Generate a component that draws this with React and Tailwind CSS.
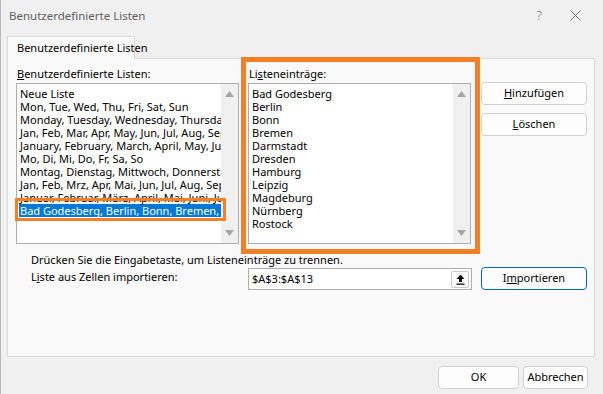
import React from 'react';

const leftItems = [
  'Neue Liste',
  'Mon, Tue, Wed, Thu, Fri, Sat, Sun',
  'Monday, Tuesday, Wednesday, Thursday, Friday, Saturday, Sunday',
  'Jan, Feb, Mar, Apr, May, Jun, Jul, Aug, Sep, Oct, Nov, Dec',
  'January, February, March, April, May, June, July',
  'Mo, Di, Mi, Do, Fr, Sa, So',
  'Montag, Dienstag, Mittwoch, Donnerstag, Freitag',
  'Jan, Feb, Mrz, Apr, Mai, Jun, Jul, Aug, Sep, Okt',
  'Januar, Februar, März, April, Mai, Juni, Juli',
  'Bad Godesberg, Berlin, Bonn, Bremen, Darmstadt',
];

const cities = [
  'Bad Godesberg',
  'Berlin',
  'Bonn',
  'Bremen',
  'Darmstadt',
  'Dresden',
  'Hamburg',
  'Leipzig',
  'Magdeburg',
  'Nürnberg',
  'Rostock',
];

const ScrollBar = () => (
  <div className="w-[17px] h-full bg-[#f0f0f0] flex flex-col items-center justify-between py-[7px]">
    <svg width="9" height="6" viewBox="0 0 9 6">
      <path d="M0 6 L4.5 0 L9 6 Z" fill="#a6a6a6" />
    </svg>
    <svg width="9" height="6" viewBox="0 0 9 6">
      <path d="M0 0 L4.5 6 L9 0 Z" fill="#a6a6a6" />
    </svg>
  </div>
);

const Button = ({ children, primary, className = '' }) => (
  <button
    className={
      'h-[23px] rounded-[4px] bg-[#fdfdfd] text-[11px] text-black flex items-center justify-center whitespace-nowrap ' +
      (primary ? 'border border-[#0067c0] ' : 'border border-[#d1d1d1] ') +
      className
    }
  >
    {children}
  </button>
);

export default function App() {
  return (
    <div
      className="relative w-[603px] h-[394px] bg-[#f0f0f0] border-l border-[#b8b8b8] text-[11px] text-black overflow-hidden"
      style={{ fontFamily: '"Noto Sans", "Open Sans", sans-serif' }}
    >
      {/* title bar */}
      <div className="h-[31px] flex items-center justify-between pl-[8px] pr-[22px]">
        <span className="text-[#5f5f5f] text-[11.5px]">Benutzerdefinierte Listen</span>
        <div className="flex items-center gap-[28px] text-[#6f6f6f]">
          <span className="text-[13px] font-light">?</span>
          <svg width="11" height="11" viewBox="0 0 11 11">
            <path d="M0.5 0.5 L10.5 10.5 M10.5 0.5 L0.5 10.5" stroke="#6f6f6f" strokeWidth="1" />
          </svg>
        </div>
      </div>

      {/* tab */}
      <div className="pl-[6px] h-[27px] flex items-end">
        <div className="h-[23px] w-[128px] -mb-px relative z-10 border border-b-0 border-[#d9d9d9] bg-[#f9f9f9] flex items-center pl-[9px] whitespace-nowrap">
          Benutzerdefinierte Listen
        </div>
      </div>

      {/* panel */}
      <div className="ml-[6px] mr-[8px] h-[299px] border border-[#d9d9d9] bg-[#f9f9f9]">
        <div className="flex pl-[8px] pt-[7px]">
          <div className="w-[224px]">
            <div className="h-[15px] leading-[15px] pl-[1px]">
              <u>B</u>enutzerdefinierte Listen:
            </div>
            <div className="mt-[2px] w-[223px] h-[161px] border border-[#adadad] bg-white flex">
              <div className="flex-1 overflow-hidden pt-[3px] pl-[2px]">
                {leftItems.map((item, i) => (
                  <div
                    key={i}
                    className={
                      'h-[13px] leading-[13px] whitespace-nowrap pl-px ' +
                      (i === leftItems.length - 1 ? 'bg-[#0078d7] text-white' : '')
                    }
                  >
                    {item}
                  </div>
                ))}
              </div>
              <ScrollBar />
            </div>
          </div>

          <div className="ml-[8px] w-[224px]">
            <div className="h-[15px] leading-[15px] pl-px">
              Li<u>s</u>teneinträge:
            </div>
            <div className="mt-[2px] w-[223px] h-[161px] border border-[#adadad] bg-white flex">
              <div className="flex-1 overflow-hidden pt-[3px] pl-[3px]">
                {cities.map((c) => (
                  <div key={c} className="h-[13px] leading-[13px] whitespace-nowrap">
                    {c}
                  </div>
                ))}
              </div>
              <ScrollBar />
            </div>
          </div>

          <div className="ml-[9px] pt-[16px] flex flex-col gap-[8px]">
            <Button className="w-[106px]">
              <span>
                <u>H</u>inzufügen
              </span>
            </Button>
            <Button className="w-[106px]">
              <span>
                <u>L</u>öschen
              </span>
            </Button>
          </div>
        </div>

        <div className="pl-[23px] mt-[8px] h-[15px] leading-[15px]">
          Drücken Sie die Eingabetaste, um Listeneinträge zu trennen.
        </div>
        <div className="flex items-start mt-px">
          <div className="w-[240px] pl-[23px] pt-px leading-[15px]">
            L<u>i</u>ste aus Zellen importieren:
          </div>
          <div className="w-[224px] h-[22px] border border-[#adadad] bg-white flex items-center justify-between pl-[3px] pr-[2px]">
            <span>$A$3:$A$13</span>
            <div className="w-[18px] h-[17px] border border-[#c8c8c8] rounded-[2px] bg-[#fbfbfb] flex items-center justify-center">
              <svg width="9" height="11" viewBox="0 0 9 11">
                <path d="M4.5 0.5 L8.5 5 L6 5 L6 8 L3 8 L3 5 L0.5 5 Z" fill="#111" />
                <rect x="0.5" y="9.5" width="8" height="1.3" fill="#111" />
              </svg>
            </div>
          </div>
          <Button primary className="ml-[9px] w-[106px] -mt-px">
            <span>
              I<u>m</u>portieren
            </span>
          </Button>
        </div>
      </div>

      {/* footer */}
      <div className="flex justify-end gap-[4px] pr-[15px] mt-[9px]">
        <Button className="w-[81px] h-[22px]">OK</Button>
        <Button className="w-[65px] h-[22px]">Abbrechen</Button>
      </div>

      {/* annotation highlights */}
      <div className="absolute left-[240px] top-[57px] w-[239px] h-[197px] border-[5px] border-[#f47f24]" />
      <div className="absolute left-[14px] top-[198px] w-[211px] h-[23px] border-[3px] border-[#f47f24]" />
    </div>
  );
}
